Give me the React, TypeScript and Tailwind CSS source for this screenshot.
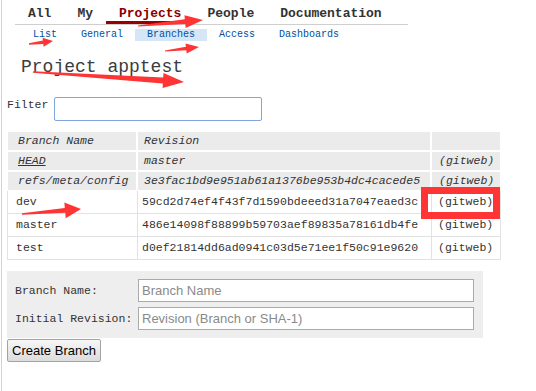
import React from "react";

const tabs = ["All", "My", "Projects", "People", "Documentation"];
const subTabs = ["List", "General", "Branches", "Access", "Dashboards"];

const metaRows = [
  { name: "HEAD", rev: "master", link: true },
  { name: "refs/meta/config", rev: "3e3fac1bd9e951ab61a1376be953b4dc4cacede5", link: false },
];

const branches = [
  { name: "dev", rev: "59cd2d74ef4f43f7d1590bdeeed31a7047eaed3c" },
  { name: "master", rev: "486e14098f88899b59703aef89835a78161db4fe" },
  { name: "test", rev: "d0ef21814dd6ad0941c03d5e71ee1f50c91e9620" },
];

// red annotation arrow: thin tail widening into a triangular head
function arrowPoints(x0: number, y0: number, x1: number, y1: number, head: number, hw: number, t0: number, t1: number) {
  const dx = x1 - x0;
  const dy = y1 - y0;
  const len = Math.hypot(dx, dy);
  const ux = dx / len;
  const uy = dy / len;
  const nx = -uy;
  const ny = ux;
  const bx = x1 - ux * head;
  const by = y1 - uy * head;
  const pts = [
    [x0 + nx * t0, y0 + ny * t0],
    [bx + nx * t1, by + ny * t1],
    [bx + nx * hw, by + ny * hw],
    [x1, y1],
    [bx - nx * hw, by - ny * hw],
    [bx - nx * t1, by - ny * t1],
    [x0 - nx * t0, y0 - ny * t0],
  ];
  return pts.map((p) => p.map((v) => v.toFixed(1)).join(",")).join(" ");
}

const Annotations = () => (
  <div className="pointer-events-none absolute inset-0">
    <svg width="536" height="391" className="absolute left-0 top-0">
      <g fill="#ff3434">
        <polygon points={arrowPoints(138, 26, 203, 20, 18, 6.5, 0.6, 2.5)} />
        <polygon points={arrowPoints(29, 44, 53, 41, 10, 4.5, 0.8, 1.8)} />
        <polygon points={arrowPoints(165, 51, 199, 47, 13, 5, 0.6, 1.8)} />
        <polygon points={arrowPoints(33, 72, 184, 82, 21, 7.5, 0.8, 3)} />
        <polygon points={arrowPoints(22, 214, 81, 209, 16, 8, 0.8, 2.5)} />
      </g>
    </svg>
    <div className="absolute left-[421px] top-[187px] h-[32px] w-[79px] border-[7px] border-[#ff3434]" />
  </div>
);

export default function App() {
  return (
    <div className="relative h-[391px] w-[536px] overflow-hidden bg-white font-['Liberation_Mono',monospace] text-[#333]">
      <div className="ml-[1px] h-full border-l border-[#c7d6e6]">
        {/* top tabs */}
        <div className="ml-[13px] flex w-[393px] border-b border-[#cfcfcf]">
          {tabs.map((t) => (
            <div
              key={t}
              className={`px-[13px] pt-[7px] text-[13px] font-bold leading-[14px] border-b-[3px] ${
                t === "Projects" ? "border-[#990000] text-[#8b0000]" : "border-transparent text-[#333]"
              }`}
            >
              {t}
            </div>
          ))}
        </div>

        {/* sub tabs */}
        <div className="ml-[19px] mt-[4px] flex">
          {subTabs.map((t) => (
            <div
              key={t}
              className={`px-[12px] text-[10px] leading-[12px] text-[#0050a0] ${t === "Branches" ? "bg-[#d5e7f7]" : ""}`}
            >
              {t}
            </div>
          ))}
        </div>

        <div className="ml-[19px] mt-[16px] text-[18px] leading-[20px] text-[#3c3c3c]">Project apptest</div>

        {/* filter */}
        <div className="ml-[5px] mt-[20px] flex items-start gap-[6px]">
          <span className="mt-[1px] text-[11.5px] leading-[14px]">Filter</span>
          <input className="h-[24px] w-[208px] rounded-[2px] border border-[#7fa6dd] bg-white outline-none" />
        </div>

        {/* branch table */}
        <div className="ml-[5px] mt-[11px] w-[494px] text-[11.5px]">
          <div className="flex flex-col gap-[2px] pl-[1px] italic">
            <div className="grid h-[18px] grid-cols-[128px_292px_68px] gap-x-[2px]">
              <div className="flex items-center bg-[#ebebeb] pl-[10px]">Branch Name</div>
              <div className="flex items-center bg-[#ebebeb] pl-[6px]">Revision</div>
              <div className="bg-[#ebebeb]" />
            </div>
            {metaRows.map((r) => (
              <div key={r.name} className="grid h-[18px] grid-cols-[128px_292px_68px] gap-x-[2px]">
                <div className={`flex items-center bg-[#ebebeb] pl-[10px] ${r.name === "HEAD" ? "underline" : ""}`}>
                  {r.name}
                </div>
                <div className="flex items-center overflow-hidden whitespace-nowrap bg-[#ebebeb] pl-[6px]">{r.rev}</div>
                <div className="flex items-center bg-[#ebebeb] pl-[7px]">(gitweb)</div>
              </div>
            ))}
          </div>
          <div className="mt-[1px] border-l border-[#e2e2e2]">
            {branches.map((b) => (
              <div key={b.name} className="grid h-[23px] grid-cols-[130px_294px_69px] border-b border-[#e2e2e2]">
                <div className="flex items-center border-r border-[#e2e2e2] pl-[8px]">{b.name}</div>
                <div className="flex items-center whitespace-nowrap border-r border-[#e2e2e2] pl-[4px]">{b.rev}</div>
                <div className="flex items-center border-r border-[#e2e2e2] pl-[6px]">(gitweb)</div>
              </div>
            ))}
          </div>
        </div>

        {/* create form */}
        <div className="ml-[5px] mt-[11px] grid w-[476px] grid-cols-[123px_336px] items-center gap-y-[5px] bg-[#eeeeee] py-[8px] pl-[8px] text-[11.5px]">
          <span>Branch Name:</span>
          <input
            placeholder="Branch Name"
            className="h-[23px] border border-[#aaaaaa] bg-white px-[3px] font-['Liberation_Sans',Arial,sans-serif] text-[13px] outline-none placeholder:text-[#8a8a8a]"
          />
          <span>Initial Revision:</span>
          <input
            placeholder="Revision (Branch or SHA-1)"
            className="h-[23px] border border-[#aaaaaa] bg-white px-[3px] font-['Liberation_Sans',Arial,sans-serif] text-[13px] outline-none placeholder:text-[#8a8a8a]"
          />
        </div>
        <button className="ml-[5px] mt-[1px] h-[23px] w-[94px] rounded-[2px] border border-[#a3a3a3] bg-gradient-to-b from-[#f7f7f7] to-[#dcdcdc] font-['Liberation_Sans',Arial,sans-serif] text-[13px] leading-none text-black">
          Create Branch
        </button>
      </div>
      <Annotations />
    </div>
  );
}
